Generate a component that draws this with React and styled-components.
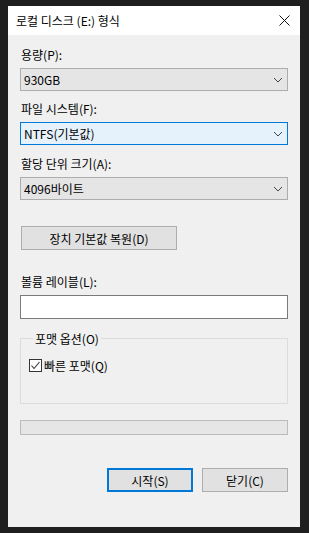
import React from 'react'
import styled, { createGlobalStyle } from 'styled-components'

const GlobalStyle = createGlobalStyle`
  html, body {
    margin: 0;
    padding: 0;
    background: #1f1f1f;
  }
  body {
    font-family: "Noto Sans CJK KR", "Noto Sans", sans-serif;
    font-size: 12px;
    color: #000;
  }
`

const Screen = styled.div`
  width: 309px;
  height: 533px;
  padding: 6px 0 0 8px;
  box-sizing: border-box;
  background: #1f1f1f;
`

const Dialog = styled.div`
  width: 292px;
  height: 521px;
  background: #f0f0f0;
  display: flex;
  flex-direction: column;
`

const TitleBar = styled.div`
  height: 29px;
  background: #fff;
  display: flex;
  align-items: center;
  justify-content: space-between;
  padding: 0 10px 0 8px;
  h1 {
    margin: 0;
    font-size: 12px;
    font-weight: normal;
    line-height: 15px;
  }
`

const Body = styled.div`
  flex: 1;
  padding: 12px 12px 0 12px;
  display: flex;
  flex-direction: column;
`

const Label = styled.div`
  line-height: 15px;
  height: 15px;
  margin-top: ${p => p.$top || 0}px;
  margin-bottom: 6px;
  padding-left: 1px;
  white-space: nowrap;
`

const Select = styled.div`
  height: 23px;
  box-sizing: border-box;
  border: 1px solid ${p => (p.$focused ? '#0078d7' : '#adadad')};
  background: ${p => (p.$focused ? '#e5f1fb' : '#e5e5e5')};
  display: flex;
  align-items: center;
  justify-content: space-between;
  padding: 0 4px 0 3px;
  line-height: 15px;
`

const Button = styled.div`
  height: 24px;
  width: ${p => p.$width}px;
  box-sizing: border-box;
  border: ${p => (p.$primary ? '2px solid #0078d7' : '1px solid #adadad')};
  background: #e1e1e1;
  display: flex;
  align-items: center;
  justify-content: center;
  line-height: 15px;
`

const ResetRow = styled.div`
  margin-top: 26px;
  padding-left: 1px;
`

const TextBox = styled.div`
  height: 24px;
  box-sizing: border-box;
  border: 1px solid #7a7a7a;
  background: #fff;
`

const Group = styled.fieldset`
  margin: 12px 0 0 0;
  padding: 12px 0 0 8px;
  height: 73px;
  box-sizing: border-box;
  border: 1px solid #dcdcdc;
  min-width: 0;
  legend {
    padding: 0 2px;
    margin-left: 4px;
    line-height: 15px;
  }
`

const CheckRow = styled.label`
  display: flex;
  align-items: center;
  gap: 2px;
  line-height: 15px;
`

const Box = styled.span`
  width: 13px;
  height: 13px;
  box-sizing: border-box;
  border: 1px solid #333;
  background: #fff;
  display: flex;
  align-items: center;
  justify-content: center;
`

const Progress = styled.div`
  margin-top: 16px;
  height: 15px;
  box-sizing: border-box;
  border: 1px solid #bcbcbc;
  background: #e6e6e6;
`

const Footer = styled.div`
  margin-top: 33px;
  display: flex;
  justify-content: flex-end;
  gap: 9px;
`

const Chevron = () => (
  <svg width="10" height="6" viewBox="0 0 10 6">
    <path d="M1 1 L5 5 L9 1" fill="none" stroke="#444" strokeWidth="1" />
  </svg>
)

function App() {
  return (
    <Screen>
      <GlobalStyle />
      <Dialog>
        <TitleBar>
          <h1>로컬 디스크 (E:) 형식</h1>
          <svg width="11" height="11" viewBox="0 0 11 11">
            <path d="M0.5 0.5 L10.5 10.5 M10.5 0.5 L0.5 10.5" stroke="#111" strokeWidth="1" />
          </svg>
        </TitleBar>
        <Body>
          <Label>용량(P):</Label>
          <Select>
            <span>930GB</span>
            <Chevron />
          </Select>
          <Label $top={10}>파일 시스템(F):</Label>
          <Select $focused>
            <span>NTFS(기본값)</span>
            <Chevron />
          </Select>
          <Label $top={11}>할당 단위 크기(A):</Label>
          <Select>
            <span>4096바이트</span>
            <Chevron />
          </Select>
          <ResetRow>
            <Button $width={156}>장치 기본값 복원(D)</Button>
          </ResetRow>
          <Label $top={24}>볼륨 레이블(L):</Label>
          <TextBox />
          <Group>
            <legend>포맷 옵션(O)</legend>
            <CheckRow>
              <Box>
                <svg width="11" height="11" viewBox="0 0 11 11">
                  <path d="M1.5 5.5 L4 8.5 L9.5 2" fill="none" stroke="#333" strokeWidth="1.1" />
                </svg>
              </Box>
              빠른 포맷(Q)
            </CheckRow>
          </Group>
          <Progress />
          <Footer>
            <Button $width={86} $primary>시작(S)</Button>
            <Button $width={86}>닫기(C)</Button>
          </Footer>
        </Body>
      </Dialog>
    </Screen>
  )
}

export default App
